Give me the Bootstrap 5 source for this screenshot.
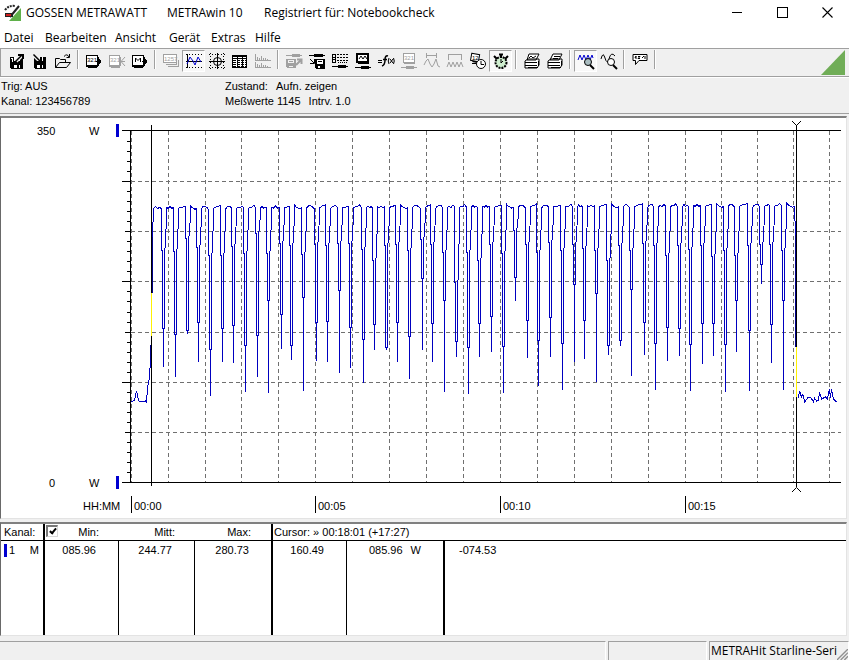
<!DOCTYPE html>
<html lang="de">
<head>
<meta charset="utf-8">
<meta name="viewport" content="width=device-width, initial-scale=1">
<title>GOSSEN METRAWATT METRAwin 10</title>
<link href="https://cdn.jsdelivr.net/npm/bootstrap@5.3.0/dist/css/bootstrap.min.css" rel="stylesheet">
<style>
:root{--face:#f0f0f0;--line:#a0a0a0;--deep:#696969}
body{background:var(--face);color:#000;font:11px/15px "Liberation Sans",Arial,sans-serif}
.ui-font{font-family:"Open Sans","Noto Sans",sans-serif;font-size:12px;line-height:16px}
.title-bar{height:26px;padding-left:4px}
.title-bar h1{font-size:12px;line-height:16px;font-weight:400}
.title-bar svg{display:block}
.t-maker{width:141px}.t-app{width:97px}
.win-group{gap:1px}
.win-btn{width:44px;height:25px}
.plain-btn{border:0;background:none;padding:0;color:#000}
.menu-bar{height:22px;padding:2px 0 0 4px}
.menu-bar a{color:#000;text-decoration:none}
.m-datei{width:41px}.m-bearb{width:70px}.m-ansicht{width:54px}.m-geraet{width:42px}.m-extras{width:44px}
.tool-bar{height:29px;border-top:1px solid var(--line);border-bottom:1px solid var(--line);padding:1px 4px 0 4px;border-left:1px solid var(--line)}
.tool{width:23px;height:22px;display:flex;align-items:center;justify-content:center;flex:none}
.tool svg{width:16px;height:16px;overflow:visible;fill:none;stroke:currentColor;shape-rendering:crispEdges}
.tool:disabled{color:#a0a0a0}
.tool.is-on{background:#f8f8f8;border:1px solid;border-color:var(--line) #fff #fff var(--line)}
.tool .f{fill:currentColor;stroke:none}
.tool .w{fill:#fff}
.tool .b{fill:#fff;stroke:none}
.tool .s{shape-rendering:auto}
.tool text{font:bold 7px "Liberation Sans",sans-serif;fill:currentColor;stroke:none}
.tool .digits{font-size:6px;font-weight:400}
.tool-sep{width:8px;height:19px;flex:none;display:flex;justify-content:center}
.tool-sep::before{content:"";border-left:1px solid var(--line);border-right:1px solid #fff}
.info-strip{height:37px;padding:1px 1px 0;border-top:1px solid #fff;border-bottom:1px solid var(--line)}
.info-left{width:224px}
.info-key{width:51px}
.sunk{background:#fff;border:1px solid;border-color:var(--deep) #e3e3e3 #e3e3e3 var(--deep);border-top:2px solid #808080;margin-right:2px}
.chart-panel{margin-top:2px}
.chart-panel svg{display:block;width:100%;height:auto}
.chart-panel text{font:11px "Liberation Sans",Arial,sans-serif;fill:#000}
.crisp{shape-rendering:crispEdges}
.table-panel{margin-top:3px}
.readout{table-layout:fixed;width:100%;border-collapse:separate;border-spacing:0}
.readout th,.readout td{font-weight:400;padding:0;vertical-align:top;text-align:right;border:0 solid #000;line-height:16px;white-space:nowrap}
.readout th{height:17px;border-bottom-width:1px}
.readout td{height:94px;padding-top:1px;border-right-width:1px}
.readout .thick{border-right-width:2px}
.readout .last{border-right-width:0;text-align:left;padding-left:14px}
.readout .val{padding-right:22px}
.readout .cap{padding-right:20px}
.readout .lead-cell{text-align:left;padding-left:3px}
.readout .cursor-cap{text-align:left;padding-left:1px}
.chan-key{display:inline-block;width:3px;height:13px;background:#0000d0;margin-right:2px}
.tick{appearance:none;width:12px;height:12px;margin:1px 0 0 1px;background:#fff;border:1px solid #d8d8d8;border-top:2px solid #777;border-left:2px solid #777;display:flex;align-items:center;justify-content:center}
.tick:checked::after{content:"";width:4px;height:7px;border:solid #000;border-width:0 2px 2px 0;transform:rotate(40deg);margin-top:-2px}
.status-bar{height:19px;margin-top:5px;gap:2px}
.pane{border-top:1px solid var(--line);border-left:1px solid var(--line);border-right:1px solid #fff}
.pane:first-child{border-left:0}
.pane-2{width:99px}.pane-3{width:140px;padding-left:1px;white-space:nowrap;line-height:18px}
</style>
<script src="https://cdn.jsdelivr.net/npm/bootstrap@5.3.0/dist/js/bootstrap.bundle.min.js" defer></script>
</head>
<body>
<div class="d-flex flex-column min-vh-100 overflow-hidden">

<header class="title-bar ui-font bg-white d-flex align-items-center">
  <svg width="18" height="18" viewBox="0 0 18 18" aria-hidden="true"><path d="M17 4V17H5z" fill="#5fb04a"/><path d="M1 6Q5 1 11 2" fill="none" stroke="#222" stroke-width="2" stroke-dasharray="2 1"/><path d="M6 13L15 2" stroke="#222" stroke-width="2"/><path d="M1 9h8v4H1z" fill="#222"/><path d="M2 10h5v2H2z" fill="#d02020"/></svg>
  <h1 class="d-flex mb-0 ms-1"><span class="t-maker">GOSSEN METRAWATT</span><span class="t-app">METRAwin 10</span><span>Registriert für: Notebookcheck</span></h1>
  <div class="win-group d-flex ms-auto align-self-start">
    <button class="plain-btn win-btn d-flex align-items-center justify-content-center" aria-label="Minimieren"><svg width="11" height="11" class="crisp"><path d="M0 5.500H10" stroke="#000"/></svg></button>
    <button class="plain-btn win-btn d-flex align-items-center justify-content-center" aria-label="Maximieren"><svg width="11" height="11" class="crisp"><path d="M.5 .5H10V10H.5z" fill="none" stroke="#000"/></svg></button>
    <button class="plain-btn win-btn d-flex align-items-center justify-content-center" aria-label="Schließen"><svg width="11" height="11"><path d="M.5 .5L10.500 10.500M10.500 .5L.5 10.500" stroke="#000" stroke-width="1.100"/></svg></button>
  </div>
</header>

<nav class="menu-bar ui-font bg-white d-flex align-items-center" aria-label="Menü">
  <a href="#" class="m-datei">Datei</a><a href="#" class="m-bearb">Bearbeiten</a><a href="#" class="m-ansicht">Ansicht</a><a href="#" class="m-geraet">Gerät</a><a href="#" class="m-extras">Extras</a><a href="#">Hilfe</a>
</nav>

<div class="tool-bar d-flex" role="toolbar" aria-label="Werkzeuge">
  <button class="plain-btn tool" aria-label="Speichern"><svg viewBox="0 0 16 16"><path class="f" d="M1 4h13v12H2l-1-1z"/><path class="b" d="M3 5h1v4H3zM5 4h6v4H5zM5 12h3v3H5zM10 12h1v3h-1z"/><path class="b" d="M2 5h1v1H2z"/><path d="M7 8L13 2" class="s" stroke="#f0f0f0" stroke-width="4"/><path d="M6.500 8.500L13 2" stroke-width="1.500" class="s"/><path d="M9 1.500h4.500V6" stroke-width="2"/></svg></button>
  <button class="plain-btn tool" aria-label="Laden"><svg viewBox="0 0 16 16"><path class="f" d="M2 4h12v12H3l-1-1z"/><path class="b" d="M5 4h6v4H5zM5 12h3v3H5zM10 12h1v3h-1z"/><path d="M1 1L8 8" class="s" stroke="#f0f0f0" stroke-width="4"/><path d="M1.500 1.500L8 8" stroke-width="1.500" class="s"/><path d="M9 3.500V8.500H4.500" stroke-width="2"/></svg></button>
  <button class="plain-btn tool" aria-label="Öffnen"><svg viewBox="0 0 16 16"><path d="M.5 14.500V5.500h4l1 1h5v3M.5 14.500L4.500 9.500H15.500L11.500 14.500z" class="s"/><path d="M9 3.500Q12 0 14 4M14.500 1v3.500h-3" class="s"/></svg></button>
  <span class="tool-sep"></span>
  <button class="plain-btn tool" aria-label="Gerät lesen"><svg viewBox="0 0 16 16"><rect x=".5" y="2.500" width="11" height="11" rx="1" class="w"/><path d="M1 12.500h11V4M2 14.500h9"/><text x="1" y="9" class="digits">321</text><path d="M10 8.500h5M13 6v5M14 7v3"/></svg></button>
  <button class="plain-btn tool" disabled aria-label="Gerät schreiben"><svg viewBox="0 0 16 16"><rect x=".5" y="2.500" width="10" height="11" rx="1" class="w"/><path d="M1 12.500h10V4M2 14.500h9"/><text x="1" y="9" class="digits">321</text><path d="M16 4L12 8.500L16 13M12 8.500h4" class="s"/></svg></button>
  <button class="plain-btn tool" aria-label="Speicher lesen"><svg viewBox="0 0 16 16"><rect x=".5" y="2.500" width="11" height="11" rx="1" class="w"/><path d="M1 12.500h11V4M2 14.500h9"/><path d="M3.500 9V5L6 7.500L8.500 5V9" class="s"/><path d="M10 8.500h5M13 6v5M14 7v3"/></svg></button>
  <span class="tool-sep"></span>
  <button class="plain-btn tool" disabled aria-label="Anzeige"><svg viewBox="0 0 16 16"><path d="M4.500 13.500h11v-7M2.500 11.500h11v-7"/><rect x=".5" y="1.500" width="13" height="8" rx="1" class="w"/><text x="1" y="8" class="digits">1257</text></svg></button>
  <button class="plain-btn tool is-on" aria-label="Kurve"><svg viewBox="0 0 16 16"><path d="M0 1.500h16M0 14.500h16" stroke-dasharray="1 2"/><path d="M1.500 1v14M0 8.500h16"/><path d="M1 11L4 4L7 8L9 12L12 4L15 9" stroke="#0000d0" class="s"/></svg></button>
  <button class="plain-btn tool" aria-label="XY"><svg viewBox="0 0 16 16"><path d="M0 1.500h16M0 14.500h16M1.500 0v16M14.500 0v16" stroke-dasharray="1 2"/><path d="M8.500 0v16M0 8.500h16"/><circle cx="8.500" cy="8.500" r="4" class="s"/></svg></button>
  <button class="plain-btn tool" aria-label="Tabelle"><svg viewBox="0 0 16 16"><rect x=".5" y="2.500" width="14" height="12" class="w"/><path d="M1 3.500h14M1 5.500h14M5.500 3v12M10.500 3v12"/><path d="M1 7.500h14M1 9.500h14M1 11.500h14M1 13.500h14" stroke-dasharray="3 1"/></svg></button>
  <button class="plain-btn tool" disabled aria-label="Statistik"><svg viewBox="0 0 16 16"><path d="M.5 1v6.500H16M.5 9v5.500H16"/><path d="M2.500 4v3M4.500 5v2M6.500 3v4M8.500 5v2M10.500 5v2M12.500 6v1M2.500 11v3M4.500 12v2M6.500 10v4M8.500 12v2M10.500 12v2M12.500 13v1"/></svg></button>
  <span class="tool-sep"></span>
  <button class="plain-btn tool" disabled aria-label="Datei aufzeichnen"><svg viewBox="0 0 16 16"><path d="M0 2.500h16" /><path class="f" d="M6 1h8v3H6zM0 6h10v9H1l-1-1z"/><path d="M2.500 7.500h5v2h-5zM3 13.500h4" stroke="#f0f0f0"/><path d="M10 12L15 7M11 6.500h4.500V11" class="s" stroke-width="2"/></svg></button>
  <button class="plain-btn tool" aria-label="Datei wiedergeben"><svg viewBox="0 0 16 16"><path d="M0 2.500h16"/><path class="f" d="M5 1h9v3H5zM6 6h10v10H7l-1-1z"/><path class="b" d="M8 7h6v4H8zM9 13h2v2H9z"/><path d="M9 8.500h4"/><path d="M1 6l4 4M5.500 6v4.500H1" class="s"/></svg></button>
  <button class="plain-btn tool" aria-label="Kanäle"><svg viewBox="0 0 16 16"><path d="M.5 1.500h3v8h-3zM.5 4.500h3M.5 6.500h3"/><path d="M5 1.500h11M5 4.500h11M5 7.500h11" stroke-dasharray="2 1"/><path d="M6 9.500h9" stroke-dasharray="1 1"/><path d="M0 13.500h16"/><path class="f" d="M6 12h8v3H6z"/></svg></button>
  <button class="plain-btn tool" aria-label="Monitor"><svg viewBox="0 0 16 16"><rect x="2" y="1" width="11" height="8" class="w" stroke-width="2"/><path d="M4 6L6 3L8 6L10 3L12 6" class="s"/><path d="M3 10.500h11M0 14.500h16"/><path class="f" d="M6 13h8v3H6z"/></svg></button>
  <button class="plain-btn tool" aria-label="Funktion"><svg viewBox="0 0 16 16"><path d="M0 7.500h4M0 9.500h4"/><path d="M10 3Q7 2 7 7T4 13M5 6.500h4" class="s" stroke-width="1.500"/><path d="M11 5Q9.500 8 11 11M15.500 5Q17 8 15.500 11M12 6l3 4M15 6l-3 4" class="s"/></svg></button>
  <button class="plain-btn tool" disabled aria-label="Multimeter"><svg viewBox="0 0 16 16"><rect x="2.500" y=".5" width="11" height="9" class="w"/><text x="3" y="7" class="digits">321</text><path d="M3 10.500h11M0 14.500h16"/><path class="f" d="M5 13h8v3H5z"/></svg></button>
  <button class="plain-btn tool" disabled aria-label="Periode"><svg viewBox="0 0 16 16"><path d="M2.500 0v5M12.500 0v5M3 2.500h9"/><path d="M0 12L2 8L4 6L6 11L8 14L10 11L12 6L14 13L16 14" class="s"/></svg></button>
  <button class="plain-btn tool" disabled aria-label="Bereich"><svg viewBox="0 0 16 16"><path d="M1.500 7V1.500h13V7M1 1.500h14"/><path d="M0 14L2 9L4 14L6 9L8 14L10 9L12 14L14 9L16 14" class="s"/></svg></button>
  <button class="plain-btn tool" aria-label="Zeitplan"><svg viewBox="0 0 16 16"><path d="M1 1h8v7H1zM3 9h6" class="w s" transform="rotate(10 5 5)"/><text x="2" y="7" class="digits">12</text><path d="M2 10.500h4"/><circle cx="11" cy="11" r="4.500" class="w s"/><path d="M11 8v3.500h3" class="s"/></svg></button>
  <button class="plain-btn tool is-on" aria-label="Stoppuhr"><svg viewBox="0 0 16 16"><circle cx="8" cy="9.500" r="5.500" style="fill:#cfeecf" stroke-width="2" class="s" stroke-dasharray="2 1"/><path d="M6 1.500h4M8 1v4M1 3l3 3M15 3l-3 3" stroke-width="2" class="s"/><path d="M8 6v4l2-2" class="s"/></svg></button>
  <span class="tool-sep"></span>
  <button class="plain-btn tool" aria-label="Grafik drucken"><svg viewBox="0 0 16 16"><path d="M3 7L5 1h10L12 7zM1 8l3-2h11v6l-2 3H1z" class="w s"/><path d="M1 9.500h12M1 12.500h12M14.500 8v5M4 14.500h10"/><path d="M5 5l2-2 2 2 3-2" class="s"/></svg></button>
  <button class="plain-btn tool" aria-label="Text drucken"><svg viewBox="0 0 16 16"><path d="M3 7L6 1h9L12 7zM1 8l3-2h11v6l-2 3H1z" class="w s"/><path d="M1 9.500h12M1 12.500h12M14.500 8v5M4 14.500h10"/><path d="M7 3.500h6M6 5.500h5"/></svg></button>
  <span class="tool-sep"></span>
  <button class="plain-btn tool is-on" aria-label="Kurve vergrößern"><svg viewBox="0 0 16 16"><path d="M0 7L2 2L4 7L6 2L8 7L10 2L12 7L14 2L15 5" stroke="#0000d0" class="s"/><circle cx="10" cy="9" r="3.500" style="fill:#a9bcc0" class="s"/><path d="M12 12l4 4" stroke-width="2" class="s"/></svg></button>
  <button class="plain-btn tool" aria-label="Kurve verkleinern"><svg viewBox="0 0 16 16"><path d="M0 6Q2-2 4 5T8 6Q10 -2 14 3" class="s"/><circle cx="10" cy="9" r="3.500" style="fill:#fff" class="s"/><path d="M12 12l4 4" stroke-width="2" class="s"/></svg></button>
  <span class="tool-sep"></span>
  <button class="plain-btn tool" aria-label="Notiz"><svg viewBox="0 0 16 16"><path d="M1 1.500h14v6H7L3.500 11.500V7.500H1z" class="w s"/><path d="M3 5l1-2v3M6 3.500h2L6 5.500h2M10 5l2-2M13 3v3" class="s"/></svg></button>
  <span class="tool-sep"></span>
  <svg class="ms-auto" width="24" height="25" viewBox="0 0 24 25" aria-hidden="true"><path d="M24 0V25H0z" fill="#70ad57"/></svg>
</div>

<section class="info-strip d-flex" aria-label="Status">
  <div class="info-left"><div>Trig: AUS</div><div>Kanal: 123456789</div></div>
  <div><div class="d-flex"><span class="info-key">Zustand:</span><span>Aufn. zeigen</span></div><div class="d-flex gap-2"><span>Meßwerte 1145</span><span>Intrv. 1.0</span></div></div>
</section>

<main class="sunk chart-panel">
  <svg id="chart" viewBox="1 118 845 400" role="img" aria-label="Leistung in Watt über der Zeit">
    <g id="grid" class="crisp" fill="none" stroke="#707070" stroke-dasharray="4 3"></g>
    <g id="axes" class="crisp" fill="none" stroke="#000"></g>
    <path id="curve" fill="none" stroke="#0000c0" class="crisp"></path>
    <g class="crisp" fill="none">
      <path d="M151.500 125V293M151.500 336V486M796.500 130V347M796.500 397V487" stroke="#000"/>
      <path d="M151.500 293V336M796.500 347V397" stroke="#fff200"/>
      <path d="M152.500 237V293M795.500 235V347M150.500 345V360" stroke="#00008c"/>
    </g>
    <path d="M792 121l4.500 4.500l4.500-4.500M796.500 125v6M792 492l4.500-4.500l4.500 4.500" fill="none" stroke="#000"/>
    <path d="M116 124h3v13h-3zM116 476h3v13h-3z" fill="#0000d0"/>
    <g id="labels">
      <text x="37" y="135">350</text><text x="89" y="135">W</text>
      <text x="49" y="487">0</text><text x="89" y="487">W</text>
      <text x="83" y="510">HH:MM</text>
    </g>
  </svg>
</main>

<section class="sunk table-panel flex-grow-1">
  <table class="readout">
    <colgroup><col style="width:44px"><col style="width:74px"><col style="width:76px"><col style="width:78px"><col style="width:74px"><col style="width:98px"><col></colgroup>
    <thead><tr>
      <th scope="col" class="thick lead-cell">Kanal:</th>
      <th scope="col" class="cap"><div class="d-flex justify-content-between"><input type="checkbox" class="tick" checked aria-label="Statistik anzeigen"><span>Min:</span></div></th>
      <th scope="col" class="cap">Mitt:</th><th scope="col" class="thick cap">Max:</th>
      <th scope="col" colspan="3" class="cursor-cap">Cursor: » 00:18:01 (+17:27)</th>
    </tr></thead>
    <tbody><tr>
      <td class="thick lead-cell"><div class="d-flex align-items-center"><span class="chan-key"></span>1<span class="ms-auto me-1">M</span></div></td>
      <td class="val">085.96</td><td class="val">244.77</td><td class="thick val">280.73</td>
      <td class="val">160.49</td><td class="thick val"><div class="d-flex justify-content-end gap-2"><span>085.96</span><span>W</span></div></td><td class="last">-074.53</td>
    </tr></tbody>
  </table>
</section>

<footer class="status-bar ui-font d-flex">
  <div class="pane flex-grow-1"></div><div class="pane pane-2"></div>
  <div class="pane pane-3 d-flex"><span>METRAHit Starline-Seri</span><svg class="ms-auto align-self-end flex-shrink-1" width="11" height="11" viewBox="0 0 12 12" aria-hidden="true"><path d="M0 12L12 0M4 12L12 4M8 12L12 8" stroke="#909090" stroke-width="1.500"/></svg></div>
</footer>
</div>

<script>
const NS = 'http://www.w3.org/2000/svg';
const el = (parent, tag, attrs, text) => {
  const n = document.createElementNS(NS, tag);
  for (const k in attrs) n.setAttribute(k, attrs[k]);
  if (text) n.textContent = text;
  document.getElementById(parent).appendChild(n);
};

// Grid: one column per minute, one row per 50 W
const minutes = [131,168,205,241,278,315,352,389,426,463,500,537,574,611,648,685,721,757,793,829];
minutes.forEach(x => el('grid', 'path', {d: `M${x + .5} 131V482`}));
[181,231,281,332,382,432].forEach(y => el('grid', 'path', {d: `M131 ${y + .5}H841`}));

// Axes with a tick every 10 W
let ticks = 'M122 130.5H841M122 482.5H841M130.5 130V483';
for (let i = 1; i < 35; i++) {
  const x = i % 10 === 5 ? 122 : i % 5 === 0 ? 125 : 127;
  ticks += `M${x} ${Math.round(130.5 + i * 352 / 35) + .5}H130`;
}
[[131,'00:00'],[315,'00:05'],[500,'00:10'],[685,'00:15']].forEach(([x, t]) => {
  ticks += `M${x + .5} 496V513`;
  el('labels', 'text', {x: x + 3, y: 510}, t);
});
el('axes', 'path', {d: ticks});

// Load dips: time position, shoulder, join and lowest level
const dips = [
[163,250,328,367],[175,251,334,377],[187,238,330,334],[198,247,322,362],[210,255,349,396],[222,255,328,362],
[233,246,325,363],[245,253,345,392],[257,233,335,377],[268,253,300,393],[281,243,314,349],[291,245,345,360],
[303,254,297,391],[316,244,322,361],[327,245,321,362],[339,243,290,373],[350,243,327,368],[363,249,339,383],
[374,260,324,350],[386,245,347,350],[397,244,322,362],[409,250,336,379],[422,239,278,350],[432,244,323,362],
[444,252,300,392],[456,282,341,357],[468,252,347,394],[479,260,323,357],[491,244,316,352],[503,253,346,393],
[515,230,277,301],[527,244,320,358],[538,252,340,386],[550,242,317,357],[562,250,343,390],[574,244,284,362],
[584,248,320,359],[596,250,293,382],[608,260,345,355],[620,245,340,346],[631,250,289,376],[644,243,322,355],
[655,245,343,390],[667,255,327,361],[679,245,328,356],[690,249,344,391],[702,245,323,364],[713,256,323,356],
[725,250,344,392],[736,255,300,352],[749,245,330,391],[761,244,264,284],[771,244,324,363],[783,250,300,390]];
const tops = [[1,-1,1,0,1],[0,1,-1,1,0],[1,0,0,-1,-1],[-2,0,1,2,1],[1,-1,-1,0,2],[1,0,-1,-1,-2],[2,0,-1,-1,1],[1,0,1,-1,0],[1,0,0,-2,1]];
const toPath = pts => 'M' + pts.map(([x, y]) => `${x + .5} ${y.toFixed(1)}`).join('L');
const idle = [[131,402],[134,400],[136,391],[138,400],[139,402],[145,401],[146,402],[147,388],[149,377],[150,360],[151,336]];
const pts = [[152,293],[152,237]];
let start = 153;
const plateau = (end, i) => {
  const base = 207.5 - 2.4 * (start - 153) / 640;
  tops[i % tops.length].forEach((d, k) => pts.push([start + (end - start) * k / 4, base + d]));
};
dips.forEach(([x, shoulder, join, low], i) => {
  plateau(x - 2, i);
  pts.push([x - 2, shoulder], [x - 1, shoulder], [x - 1, join], [x, join], [x, low], [x, join],
           [x + 1, join], [x + 1, shoulder], [x + 2, shoulder - 4], [x + 3, 212]);
  start = x + 3;
});
plateau(794, 3);
pts.push([795,235],[796,347]);
const tail = [[797,397],[798,397],[799,391],[801,397],[802,395],[803,396],[804,402],[808,397],[810,397],[813,402],[814,398],[816,401],
  [818,400],[819,392],[821,399],[825,397],[827,399],[829,389],[830,398],[831,389],[833,399],[836,402]];
document.getElementById('curve').setAttribute('d', toPath(idle) + toPath(pts) + toPath(tail));
</script>
</body>
</html>
